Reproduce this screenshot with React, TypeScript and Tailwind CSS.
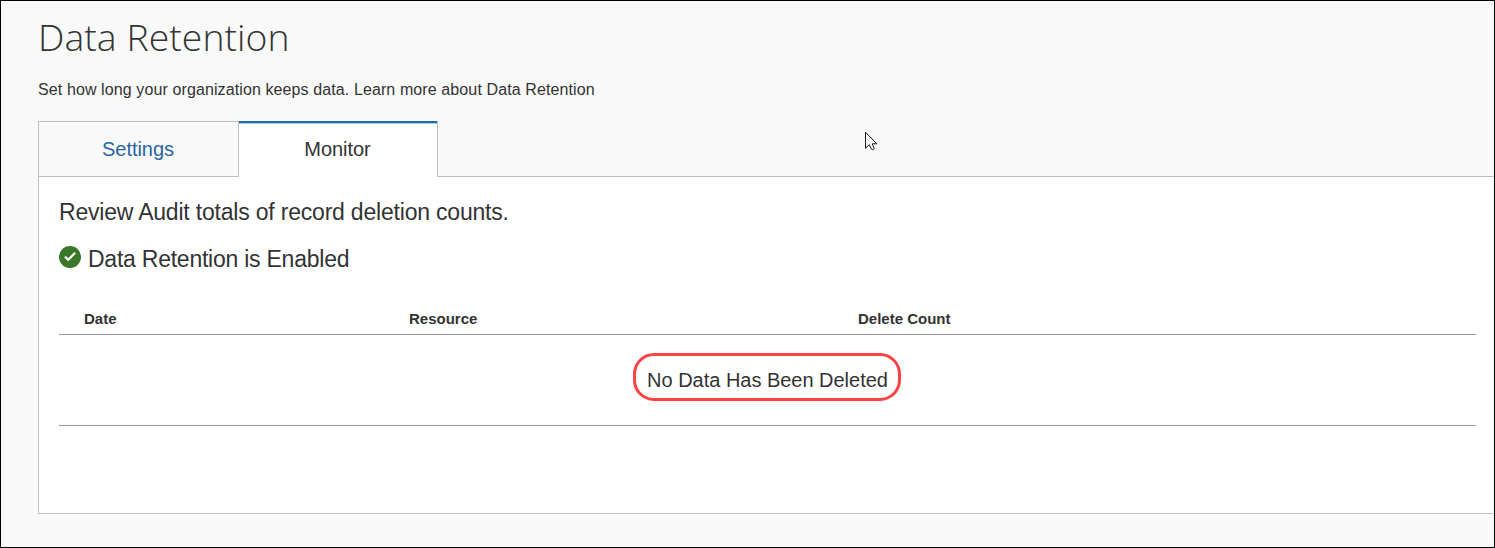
const columns = [
  { label: "Date", className: "w-[325px]" },
  { label: "Resource", className: "w-[449px]" },
  { label: "Delete Count", className: "flex-1" },
];

function CheckBadge() {
  return (
    <svg className="mt-[1px] size-[22px] shrink-0" viewBox="0 0 22 22" aria-hidden="true">
      <circle cx="11" cy="11" r="11" fill="#3a7728" />
      <path d="M6 10.6l3.2 3.1L16.2 6.8" fill="none" stroke="#fff" strokeWidth="2.2" />
    </svg>
  );
}

function Cursor() {
  return (
    <svg className="absolute left-[864px] top-[130px] h-[21px] w-[13px]" viewBox="0 0 13 21" aria-hidden="true">
      <path
        d="M.5 1.2V17.3L4.3 13.6L6.5 18.3C7 19.3 9.6 18.3 9.2 17.2L7.1 12.8H11.8Z"
        fill="#fff"
        stroke="#15151f"
        strokeWidth="1"
      />
    </svg>
  );
}

function Tabs() {
  return (
    <div role="tablist" className="flex h-[56px] text-[20px] leading-[55px] tracking-[-0.04px]">
      <button role="tab" aria-selected="false" className="w-[200px] border border-r-0 border-[#bfbfbf] pr-[1px] text-[#2a64a3]">
        Settings
      </button>
      <div className="flex w-[200px] border-x border-[#bfbfbf] bg-white">
        <button role="tab" aria-selected="true" className="flex-1 border-t-2 border-[#1b6bad] pr-[1px] pb-[2px] leading-[52px] shadow-[inset_0_1px_0_#a9cbe4]">
          Monitor
        </button>
      </div>
      <div className="flex-1 border-b border-[#bfbfbf]" />
    </div>
  );
}

export default function App() {
  return (
    <div className="relative h-[548px] w-[1495px] overflow-hidden border border-black bg-[#f9f9f9] pl-[37px] font-['Liberation_Sans',Arial,sans-serif] text-[#333]">
      <h1 className="h-[78px] pt-[8px] font-['Open_Sans',sans-serif] text-[37.33px] font-light leading-[56px] tracking-[0.07px] whitespace-nowrap">
        <span>Data Retention</span>
      </h1>
      <p className="h-[42px] text-[16px] leading-[22px] tracking-[0.107px] whitespace-nowrap">
        <span>Set how long your organization keeps data. Learn more about Data Retention</span>
      </p>
      <Tabs />
      <main className="h-[337px] border-b border-l border-[#bfbfbf] bg-white pl-[20px] pr-[18px]">
        <h2 className="h-[68px] pt-[20px] text-[23px] leading-[30px] tracking-[-0.2px]">
          <span>Review Audit totals of record deletion counts.</span>
        </h2>
        <div className="flex h-[58px] gap-[7px] text-[23px] leading-[28px] tracking-[-0.24px]">
          <CheckBadge />
          <span>Data Retention is Enabled</span>
        </div>
        <div className="flex h-[32px] border-b border-[#939598] pl-[25px] text-[15px] font-bold leading-[32px]">
          {columns.map((c) => (
            <div key={c.label} className={c.className}>
              <span>{c.label}</span>
            </div>
          ))}
        </div>
        <div className="flex h-[91px] justify-center border-b border-[#999] pt-[18px]">
          <div className="mr-[2px] flex h-[48px] w-[268px] items-center justify-center rounded-[21px] border-3 border-[#fc4343] pl-[2px] pt-[5px] text-[20px] tracking-[-0.02px] whitespace-nowrap">
            No Data Has Been Deleted
          </div>
        </div>
      </main>
      <Cursor />
    </div>
  );
}
